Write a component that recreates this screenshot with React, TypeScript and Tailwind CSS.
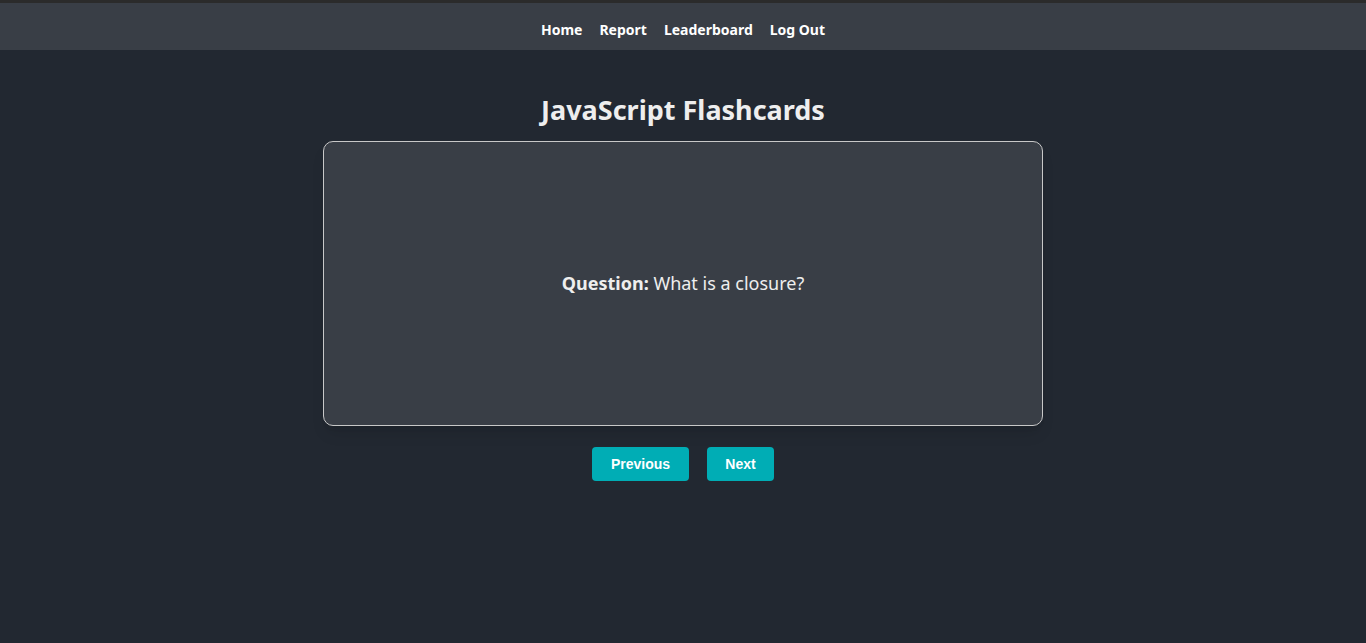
import React, { useState } from 'react';

const cards = [
  { question: 'What is a closure?', answer: 'A function bundled with references to its surrounding lexical scope.' },
  { question: 'What is hoisting?', answer: 'Declarations are moved to the top of their scope before execution.' },
];

export default function App() {
  const [index, setIndex] = useState(0);
  const [flipped, setFlipped] = useState(false);
  const card = cards[index];

  return (
    <div className="min-h-screen bg-[#222831] text-[#eeeeee] border-t-[3px] border-[#2b2b2b] font-['Noto_Sans',sans-serif]">
      <nav className="h-[47px] pt-[5px] bg-[#393e46] flex items-center justify-center gap-[17px] text-[14px] font-bold text-white">
        <a href="#">Home</a>
        <a href="#">Report</a>
        <a href="#">Leaderboard</a>
        <a href="#">Log Out</a>
      </nav>

      <main className="flex flex-col items-center">
        <h1 className="mt-[40px] mb-[11px] text-[27px] font-bold leading-[40px]">JavaScript Flashcards</h1>

        <div
          onClick={() => setFlipped(!flipped)}
          className="w-[720px] h-[285px] rounded-[10px] border border-[#c8c8c8] bg-[#393e46] shadow-lg flex items-center justify-center text-[18px] cursor-pointer"
        >
          {flipped ? (
            <p><span className="font-bold">Answer:</span> {card.answer}</p>
          ) : (
            <p><span className="font-bold">Question:</span> {card.question}</p>
          )}
        </div>

        <div className="mt-[21px] flex gap-[18px] font-['Liberation_Sans',sans-serif] text-[14px] font-bold text-white">
          <button
            onClick={() => { setIndex((index - 1 + cards.length) % cards.length); setFlipped(false); }}
            className="h-[34px] w-[97px] rounded-[4px] bg-[#00adb5]"
          >
            Previous
          </button>
          <button
            onClick={() => { setIndex((index + 1) % cards.length); setFlipped(false); }}
            className="h-[34px] w-[67px] rounded-[4px] bg-[#00adb5]"
          >
            Next
          </button>
        </div>
      </main>
    </div>
  );
}
